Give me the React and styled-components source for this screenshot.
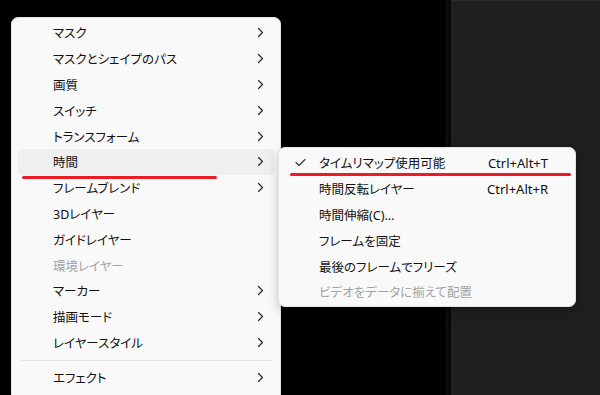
import React from "react";
import styled, { createGlobalStyle } from "styled-components";

const GlobalStyle = createGlobalStyle`
  html, body {
    margin: 0;
    padding: 0;
    width: 600px;
    height: 395px;
    overflow: hidden;
    background: #000;
  }
  * { box-sizing: border-box; }
`;

const Screen = styled.div`
  position: relative;
  display: flex;
  width: 600px;
  height: 395px;
  font-family: "Noto Sans", "Noto Sans CJK JP", sans-serif;
  font-feature-settings: "palt";
`;

const Stage = styled.div`
  width: 446px;
  background: #000;
`;

const Splitter = styled.div`
  width: 5px;
  background: #090909;
  border-left: 1px solid #141414;
`;

const Panel = styled.div`
  flex: 1;
  background: #1f1f1f;
  border-top: 1px solid #2c2c2c;
`;

const Menu = styled.div`
  position: absolute;
  left: ${(p) => p.$left}px;
  top: ${(p) => p.$top}px;
  width: ${(p) => p.$width}px;
  padding: ${(p) => p.$pad};
  background: #f9f9f9;
  border: 1px solid #e3e3e3;
  border-radius: 7px;
  box-shadow: 0 4px 12px rgba(0, 0, 0, 0.22);
  display: flex;
  flex-direction: column;
`;

const Row = styled.div`
  display: flex;
  align-items: center;
  height: 25.8px;
  margin: 0 ${(p) => p.$inset}px;
  padding: 0 10px 0 ${(p) => p.$indent}px;
  border-radius: 4px;
  font-size: 12.5px;
  color: ${(p) => (p.$disabled ? "#a3a3a3" : "#111")};
  background: ${(p) => (p.$active ? "#efefef" : "transparent")};
  position: relative;
`;

const Label = styled.span`
  flex: 1;
  white-space: nowrap;
`;

const Shortcut = styled.span`
  font-size: 13px;
  color: #111;
  padding-right: 13px;
  white-space: nowrap;
`;

const CheckSlot = styled.span`
  position: absolute;
  left: 12px;
  top: 8px;
  width: 11px;
  height: 9px;
  display: flex;
`;

const Separator = styled.div`
  height: 1px;
  background: #e2e2e2;
  margin: 5px 9px 3px 9px;
`;

const Mark = styled.div`
  position: absolute;
  left: ${(p) => p.$left}px;
  top: ${(p) => p.$top}px;
  width: ${(p) => p.$width}px;
  height: 3px;
  border-radius: 2px;
  background: #ea1c24;
`;

const Chevron = () => (
  <svg width="7" height="11" viewBox="0 0 7 11">
    <polyline
      points="1.5,1.5 5.5,5.5 1.5,9.5"
      fill="none"
      stroke="#2a2a2a"
      strokeWidth="1.2"
      strokeLinecap="round"
      strokeLinejoin="round"
    />
  </svg>
);

const Check = () => (
  <svg width="11" height="9" viewBox="0 0 11 9">
    <polyline
      points="1,4.5 4,7.5 10,1.5"
      fill="none"
      stroke="#333"
      strokeWidth="1.1"
      strokeLinecap="round"
      strokeLinejoin="round"
    />
  </svg>
);

const mainItems = [
  { label: "マスク", sub: true },
  { label: "マスクとシェイプのパス", sub: true },
  { label: "画質", sub: true },
  { label: "スイッチ", sub: true },
  { label: "トランスフォーム", sub: true },
  { label: "時間", sub: true, active: true },
  { label: "フレームブレンド", sub: true },
  { label: "3Dレイヤー" },
  { label: "ガイドレイヤー" },
  { label: "環境レイヤー", disabled: true },
  { label: "マーカー", sub: true },
  { label: "描画モード", sub: true },
  { label: "レイヤースタイル", sub: true },
];

const timeItems = [
  { label: "タイムリマップ使用可能", shortcut: "Ctrl+Alt+T", checked: true },
  { label: "時間反転レイヤー", shortcut: "Ctrl+Alt+R" },
  { label: "時間伸縮(C)..." },
  { label: "フレームを固定" },
  { label: "最後のフレームでフリーズ" },
  { label: "ビデオをデータに揃えて配置", disabled: true },
];

export default function App() {
  return (
    <>
      <GlobalStyle />
      <Screen>
        <Stage />
        <Splitter />
        <Panel />

        <Menu $left={11} $top={17} $width={270} $pad="2px 0 10px">
          {mainItems.map((item) => (
            <Row
              key={item.label}
              $inset={6}
              $indent={35}
              $active={item.active}
              $disabled={item.disabled}
            >
              <Label>{item.label}</Label>
              {item.sub && <Chevron />}
            </Row>
          ))}
          <Separator />
          <Row $inset={6} $indent={35}>
            <Label>エフェクト</Label>
            <Chevron />
          </Row>
        </Menu>

        <Menu $left={278} $top={147} $width={298} $pad="2px 0 1px">
          {timeItems.map((item) => (
            <Row
              key={item.label}
              $inset={4}
              $indent={36}
              $disabled={item.disabled}
            >
              {item.checked && (
                <CheckSlot>
                  <Check />
                </CheckSlot>
              )}
              <Label>{item.label}</Label>
              {item.shortcut && <Shortcut>{item.shortcut}</Shortcut>}
            </Row>
          ))}
        </Menu>

        <Mark $left={22} $top={176} $width={195} />
        <Mark $left={290} $top={173} $width={281} />
      </Screen>
    </>
  );
}
